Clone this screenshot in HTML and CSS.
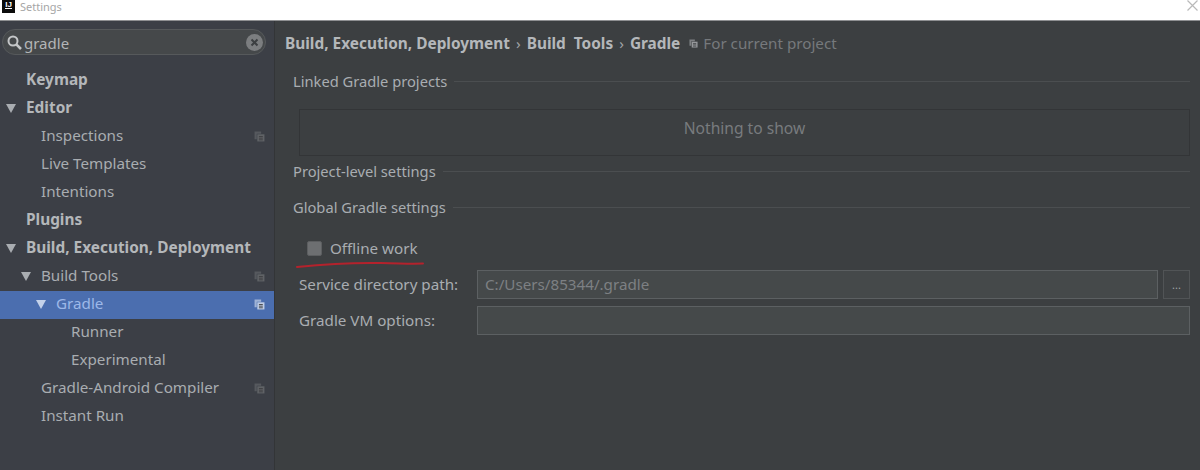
FILE: index.html
```html
<!DOCTYPE html>
<html lang="en">
<head>
<meta charset="utf-8">
<title>Settings</title>
<link rel="stylesheet" href="styles.css">
</head>
<body>
<svg class="defs" width="0" height="0" aria-hidden="true">
  <symbol id="copy" viewBox="0 0 10 10">
    <path d="M0.500 0.500h6v2h-4v5h-2z" fill="currentColor" opacity=".55"/>
    <rect x="3" y="3" width="6.500" height="6.500" fill="currentColor" opacity=".75"/>
    <path d="M4.500 5h3.500M4.500 6.500h3.500M4.500 8h3.500" stroke="#3c3f41" stroke-width=".8"/>
  </symbol>
  <symbol id="arrow" viewBox="0 0 10 9">
    <path d="M0 0h10l-5 9z" fill="currentColor"/>
  </symbol>
</svg>
<header class="titlebar">
  <span class="logo"><span class="logo-text">IJ</span></span>
  <span class="title">Settings</span>
  <svg class="close" width="11" height="11" viewBox="0 0 11 11"><path d="M.5.500l10 10M10.500.500l-10 10" stroke="#b9b9b9" stroke-width="1.200"/></svg>
</header>
<div class="window">
  <aside class="sidebar">
    <div class="search">
      <svg class="search-icon" width="15" height="15" viewBox="0 0 15 15"><circle cx="6" cy="6" r="4.500" fill="none" stroke="#c4c6c8" stroke-width="2"/><path d="M9.300 9.300l4.700 4.700" stroke="#c4c6c8" stroke-width="2.600"/></svg>
      <span class="search-text">gradle</span>
      <svg class="search-clear" width="17" height="17" viewBox="0 0 17 17"><circle cx="8.500" cy="8.500" r="8.500" fill="#7c7e80"/><path d="M5.500 5.500l6 6M11.500 5.500l-6 6" stroke="#3c3f41" stroke-width="2"/></svg>
    </div>
    <ul class="tree">
      <li class="row bold l0"><span class="label">Keymap</span></li>
      <li class="row bold l0"><svg class="arrow"><use href="#arrow"/></svg><span class="label">Editor</span></li>
      <li class="row l1"><span class="label">Inspections</span><svg class="copy"><use href="#copy"/></svg></li>
      <li class="row l1"><span class="label">Live Templates</span></li>
      <li class="row l1"><span class="label">Intentions</span></li>
      <li class="row bold l0"><span class="label">Plugins</span></li>
      <li class="row bold l0"><svg class="arrow"><use href="#arrow"/></svg><span class="label">Build, Execution, Deployment</span></li>
      <li class="row l1"><svg class="arrow"><use href="#arrow"/></svg><span class="label">Build Tools</span><svg class="copy"><use href="#copy"/></svg></li>
      <li class="row l2 selected"><svg class="arrow"><use href="#arrow"/></svg><span class="label">Gradle</span><svg class="copy"><use href="#copy"/></svg></li>
      <li class="row l3"><span class="label">Runner</span></li>
      <li class="row l3"><span class="label">Experimental</span></li>
      <li class="row l1"><span class="label">Gradle-Android Compiler</span><svg class="copy"><use href="#copy"/></svg></li>
      <li class="row l1"><span class="label">Instant Run</span></li>
    </ul>
  </aside>
  <main class="content">
    <div class="crumbs">
      <b>Build, Execution, Deployment</b><span class="sep">›</span><b class="wide">Build Tools</b><span class="sep">›</span><b>Gradle</b>
      <svg class="crumb-copy"><use href="#copy"/></svg>
      <span class="scope">For current project</span>
    </div>
    <div class="section first"><span>Linked Gradle projects</span></div>
    <div class="empty">Nothing to show</div>
    <div class="section second"><span>Project-level settings</span></div>
    <div class="section third"><span>Global Gradle settings</span></div>
    <label class="check"><span class="box"></span>Offline work
      <svg class="underline" width="132" height="10" viewBox="0 0 132 10"><path d="M1 8C30 5 60 3.500 85 4s30 1 42 .5" fill="none" stroke="#b4222c" stroke-width="2" stroke-linecap="round"/></svg>
    </label>
    <div class="field">
      <span class="field-label">Service directory path:</span>
      <span class="input">C:/Users/85344/.gradle</span>
      <span class="browse">...</span>
    </div>
    <div class="field">
      <span class="field-label">Gradle VM options:</span>
      <span class="input"></span>
    </div>
  </main>
</div>
</body>
</html>
```
FILE: styles.css
```css
* { box-sizing: border-box; }
html, body { margin: 0; height: 100%; overflow: hidden; }
body {
  width: 1200px;
  height: 470px;
  display: flex;
  flex-direction: column;
  font-family: "Noto Sans", "Open Sans", sans-serif;
  font-size: 15.2px;
  color: #a9adb1;
  background: #3c3f41;
}
.defs { position: absolute; }
.titlebar {
  height: 21px;
  flex: none;
  background: #fff;
  border-bottom: 1px solid #8f9092;
  display: flex;
  align-items: flex-start;
  padding: 0 2px;
}
.logo {
  width: 13px;
  height: 13px;
  background: #0c0c0c;
  color: #fff;
  display: flex;
  justify-content: center;
  font: bold 8px/9px "Liberation Sans", sans-serif;
}
.logo-text { border-bottom: 1px solid #fff; height: 9px; }
.title {
  margin-left: 5px;
  font-size: 11px;
  line-height: 13px;
  color: #a6a6a6;
}
.close { margin-left: auto; }
.window { flex: 1; display: flex; min-height: 0; }
.sidebar {
  width: 275px;
  flex: none;
  background: #3c3f46;
  border-right: 1px solid #333537;
  padding-top: 8px;
}
.search {
  height: 26px;
  margin: 0 8px 0 2px;
  border: 1px solid #56595b;
  border-radius: 13px;
  background: #45484a;
  display: flex;
  align-items: center;
  padding: 0 2px 0 4px;
}
.search-text { margin-left: 2px; font-size: 15px; color: #b3b5b7; padding-top: 2px; }
.search-clear { margin-left: auto; margin-top: 1px; }
.tree { list-style: none; margin: 12px 0 0; padding: 0; }
.row {
  height: 28px;
  display: flex;
  align-items: center;
  position: relative;
  padding-bottom: 4px;
  color: #a9adb1;
}
.row.bold { font-weight: 700; font-size: 15.4px; padding-left: 26px; color: #b4b7ba; }
.row.l1 { padding-left: 41px; }
.row.l2 { padding-left: 56px; }
.row.l3 { padding-left: 71px; }
.row .arrow {
  position: absolute;
  top: 9px;
  width: 10px;
  height: 9px;
  color: #a9adb1;
}
.row.l0 .arrow { left: 6px; }
.row.l1 .arrow { left: 21px; }
.row.l2 .arrow { left: 36px; }
.row .copy {
  position: absolute;
  top: 8px;
  right: 9px;
  width: 11px;
  height: 11px;
  color: #6c6f72;
}
.row.selected { background: #4b6eaf; color: #9db8e8; }
.row.selected .arrow { color: #c4d2ea; }
.row.selected .copy { color: #e6ecf5; }
.content { flex: 1; min-width: 0; padding: 0 10px 0 18px; }
.crumbs {
  height: 44px;
  margin-left: -8px;
  display: flex;
  align-items: center;
  color: #b4b7ba;
}
.crumbs b { font-weight: 700; font-size: 15.4px; }
.crumbs .wide { word-spacing: 4px; }
.sep { margin: 0 6px; color: #a0a3a6; }
.crumb-copy { width: 9px; height: 9px; margin-left: 9px; color: #b4b7ba; }
.scope { margin-left: 5px; color: #76797c; }
.section {
  display: flex;
  align-items: center;
  gap: 7px;
  height: 20px;
  font-size: 14.7px;
}
.section::after { content: ""; flex: 1; height: 1px; background: #4b4e50; }
.first { margin-top: 6px; }
.second { margin-top: 5px; }
.third { margin-top: 16px; }
.empty {
  height: 47px;
  margin: 18px 0 0 6px;
  padding-bottom: 9px;
  border: 1px solid #333537;
  display: flex;
  align-items: center;
  justify-content: center;
  font-size: 15.6px;
  color: #787b7e;
}
.check {
  display: flex;
  align-items: center;
  position: relative;
  height: 20px;
  margin: 21px 0 0 14px;
}
.box {
  width: 15px;
  height: 15px;
  margin-right: 8px;
  border-radius: 2px;
  background: #6d6f71;
  border: 1px solid #5c5e60;
}
.underline { position: absolute; left: -11px; top: 21px; }
.field {
  display: flex;
  align-items: center;
  height: 30px;
  margin: 6px 0 0 6px;
}
.check + .field { margin-top: 11px; }
.field-label { width: 178px; flex: none; }
.input {
  flex: 1;
  height: 29px;
  display: flex;
  align-items: center;
  padding-left: 7px;
  background: #45494a;
  border: 1px solid #5c6062;
  color: #7d8083;
}
.browse {
  width: 27px;
  height: 29px;
  margin-left: 5px;
  border: 1px solid #515456;
  background: #3f4244;
  display: flex;
  align-items: center;
  justify-content: center;
  font-size: 11px;
  color: #a0a3a6;
}
```
